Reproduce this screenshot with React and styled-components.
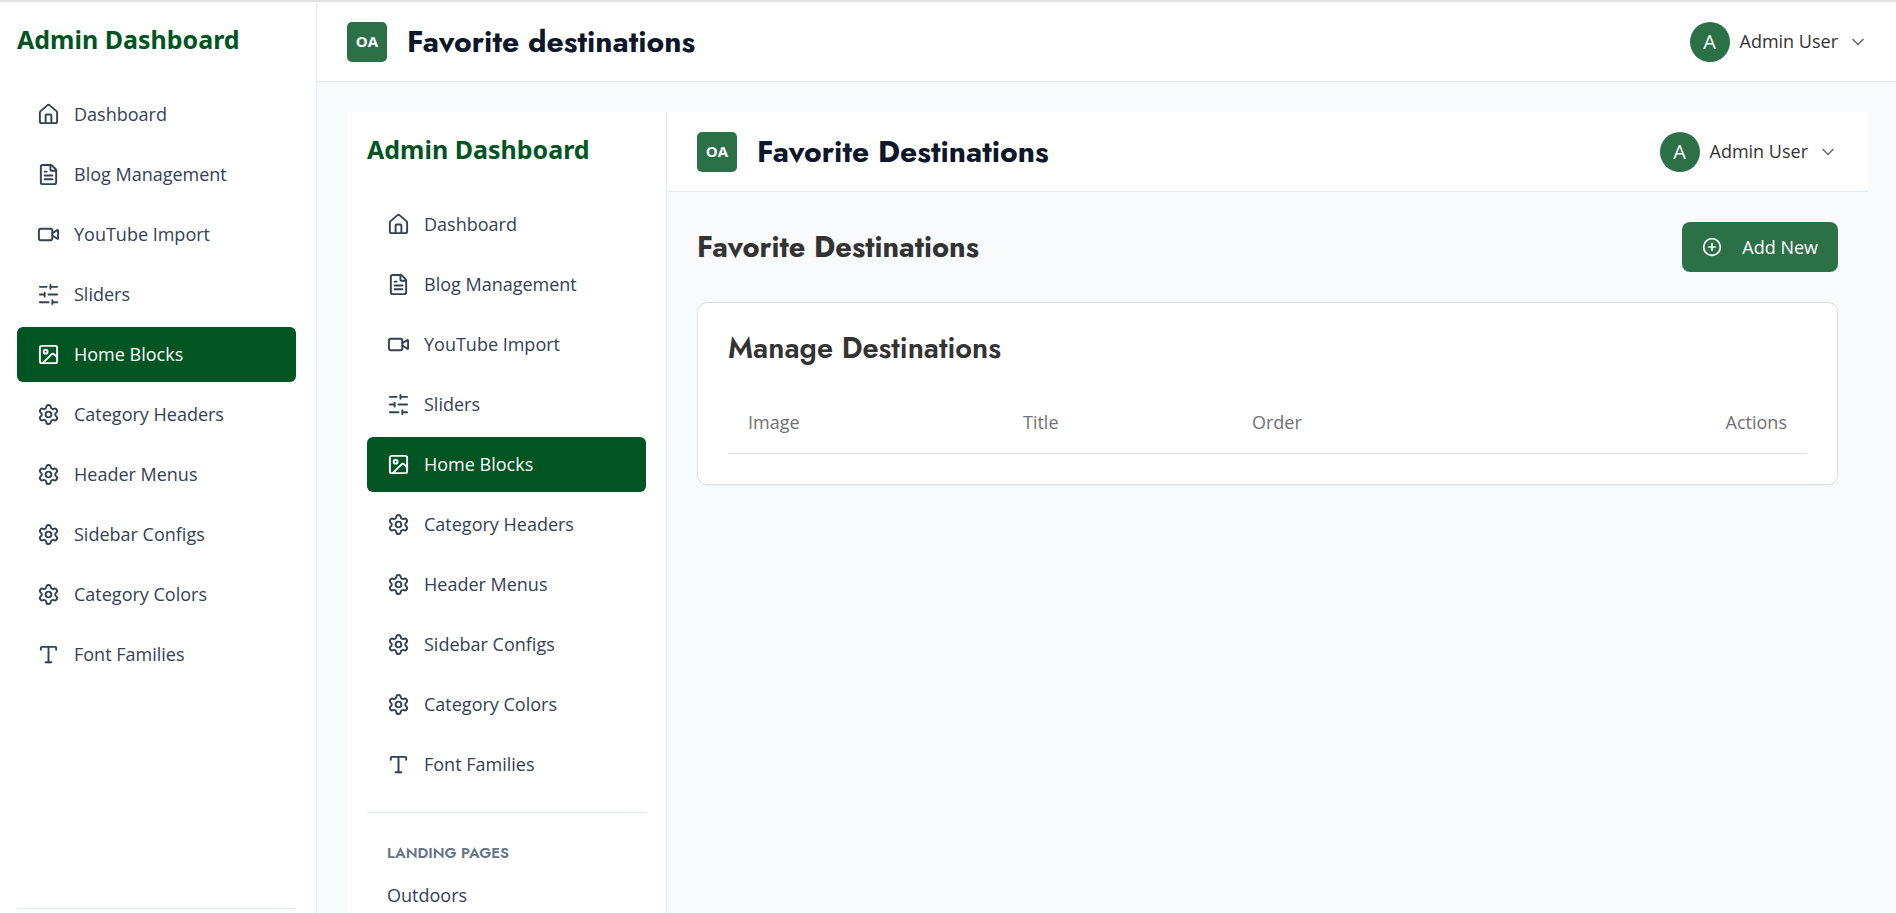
import React from "react";
import styled, { createGlobalStyle, css } from "styled-components";
import {
  House,
  FileText,
  Video,
  Image as ImageIcon,
  Settings,
  Type,
  ChevronDown,
  CirclePlus,
} from "lucide-react";

const bodyFont = `"Open Sans", "Noto Sans", sans-serif`;
const headingFont = `Jost, Lato, "Open Sans", sans-serif`;

const GlobalStyle = createGlobalStyle`
  *, *::before, *::after { box-sizing: border-box; }
  body {
    margin: 0;
    font-family: ${bodyFont};
    font-size: 18px;
    line-height: 25px;
    color: #333333;
    background: #f8fafc;
  }
  h1, h2, h3, p, ul { margin: 0; padding: 0; }
  a { color: inherit; text-decoration: none; }
  button { font: inherit; border: 0; cursor: pointer; }
`;

const Page = styled.div`
  display: flex;
  height: 100vh;
  overflow: hidden;
  border-top: 2px solid #e2e2e2;
`;

const Shell = styled.div`
  display: flex;
  min-height: 100%;
`;

const SidebarBox = styled.aside`
  display: flex;
  flex-direction: column;
  flex: none;
  width: ${(p) => (p.$flush ? 317 : 320)}px;
  padding: 20px 20px 0 ${(p) => (p.$flush ? 17 : 20)}px;
  background: #ffffff;
  border-right: 1px solid #e2e8f0;
`;

const Brand = styled.p`
  margin-bottom: 30px;
  font-family: "Noto Sans", "Open Sans", sans-serif;
  font-size: 25px;
  line-height: 35px;
  font-weight: 700;
  color: #005522;
`;

const NavList = styled.ul`
  display: flex;
  flex-direction: column;
  gap: 5px;
  list-style: none;
`;

const NavLink = styled.a`
  display: flex;
  align-items: center;
  gap: 14px;
  height: 55px;
  padding: 0 20px;
  border-radius: 6px;
  color: #334155;
  svg { flex: none; }
  ${(p) =>
    p.$active &&
    css`
      background: #005522;
      color: #ffffff;
      font-weight: 500;
    `}
`;

const NavSection = styled.section`
  margin-top: ${(p) => (p.$pinned ? "auto" : "20px")};
  padding-top: ${(p) => (p.$pinned ? 4 : 30)}px;
  border-top: 1px solid #e2e8f0;
`;

const SectionTitle = styled.h3`
  padding: 0 20px;
  margin-bottom: 10px;
  font-family: ${headingFont};
  font-size: 15px;
  line-height: 20px;
  font-weight: 600;
  text-transform: uppercase;
  color: #64748b;
`;

const SubLink = styled.a`
  display: block;
  padding: 10px 20px;
  color: #334155;
`;

const Column = styled.div`
  display: flex;
  flex-direction: column;
  flex: 1;
  min-width: 0;
`;

const HeaderBar = styled.header`
  display: flex;
  align-items: center;
  justify-content: space-between;
  flex: none;
  height: 80px;
  padding: 0 ${(p) => p.$end}px 0 30px;
  background: #ffffff;
  border-bottom: 1px solid #e2e8f0;
`;

const HeaderGroup = styled.div`
  display: flex;
  align-items: center;
  gap: 20px;
`;

const Logo = styled.div`
  display: grid;
  place-items: center;
  width: 40px;
  height: 40px;
  border-radius: 5px;
  background: #2c7048;
  color: #ffffff;
  font-size: 15px;
  font-weight: 700;
`;

const HeaderTitle = styled.h1`
  font-family: ${headingFont};
  font-size: 30px;
  line-height: 40px;
  font-weight: 700;
  color: #0f172a;
`;

const UserButton = styled.button`
  display: flex;
  align-items: center;
  gap: 10px;
  padding: 0;
  background: none;
  color: #333333;
  svg { color: #717171; }
`;

const Avatar = styled.span`
  display: grid;
  place-items: center;
  width: 40px;
  height: 40px;
  border-radius: 50%;
  background: #2c7048;
  color: #ffffff;
  font-size: 20px;
`;

const Content = styled.main`
  flex: 1;
  padding: 30px ${(p) => p.$end}px 0 30px;
`;

const InnerContent = styled.section`
  padding: 30px;
`;

const TitleRow = styled.div`
  display: flex;
  align-items: center;
  justify-content: space-between;
  margin-bottom: 30px;
`;

const PageTitle = styled.h2`
  font-family: ${headingFont};
  font-size: 29px;
  line-height: 40px;
  font-weight: 700;
`;

const AddButton = styled.button`
  display: flex;
  align-items: center;
  gap: 20px;
  height: 50px;
  padding: 0 20px;
  border-radius: 8px;
  background: #2c7048;
  color: #ffffff;
  font-weight: 500;
`;

const Card = styled.section`
  padding: 30px;
  background: #ffffff;
  border: 1px solid #dfe0e2;
  border-radius: 10px;
  box-shadow: 0 1px 2px rgba(0, 0, 0, 0.05);
`;

const CardTitle = styled.h3`
  margin-bottom: 30px;
  font-family: ${headingFont};
  font-size: 29px;
  line-height: 30px;
  font-weight: 600;
`;

const Table = styled.table`
  width: 100%;
  table-layout: fixed;
  border-collapse: collapse;
`;

const Th = styled.th`
  width: ${(p) => (p.$width ? `${p.$width}px` : "auto")};
  height: 60px;
  padding: 0 20px;
  text-align: ${(p) => p.$align || "left"};
  font-weight: 400;
  color: #717171;
  border-bottom: 1px solid #dfe0e2;
`;

function SlidersIcon({ size }) {
  return (
    <svg
      width={size}
      height={size}
      viewBox="0 0 24 24"
      fill="none"
      stroke="currentColor"
      strokeWidth="2"
      strokeLinecap="round"
      strokeLinejoin="round"
      aria-hidden="true"
    >
      <path d="M21 4h-7M10 4H3M21 12h-9M8 12H3M21 20h-5M12 20H3M14 2v4M8 10v4M16 18v4" />
    </svg>
  );
}

const items = [
  ["Dashboard", House],
  ["Blog Management", FileText],
  ["YouTube Import", Video],
  ["Sliders", SlidersIcon],
  ["Home Blocks", ImageIcon],
  ["Category Headers", Settings],
  ["Header Menus", Settings],
  ["Sidebar Configs", Settings],
  ["Category Colors", Settings],
  ["Font Families", Type],
];

function Sidebar({ flush, children }) {
  return (
    <SidebarBox $flush={flush}>
      <Brand>Admin Dashboard</Brand>
      <nav>
        <NavList>
          {items.map(([label, Icon]) => (
            <li key={label}>
              <NavLink href="#" $active={label === "Home Blocks"}>
                <Icon size={23} />
                {label}
              </NavLink>
            </li>
          ))}
        </NavList>
      </nav>
      {children}
    </SidebarBox>
  );
}

function Header({ title, end }) {
  return (
    <HeaderBar $end={end}>
      <HeaderGroup>
        <Logo>OA</Logo>
        <HeaderTitle>{title}</HeaderTitle>
      </HeaderGroup>
      <UserButton type="button">
        <Avatar>A</Avatar>
        Admin User
        <ChevronDown size={20} />
      </UserButton>
    </HeaderBar>
  );
}

export default function App() {
  return (
    <>
      <GlobalStyle />
      <Page>
        <Sidebar flush>
          <NavSection $pinned />
        </Sidebar>
        <Column>
          <Header title="Favorite destinations" end={28} />
          <Content $end={28}>
            <Shell>
              <Sidebar>
                <NavSection>
                  <SectionTitle>Landing Pages</SectionTitle>
                  <SubLink href="#">Outdoors</SubLink>
                </NavSection>
              </Sidebar>
              <Column>
                <Header title="Favorite Destinations" end={30} />
                <InnerContent>
                  <TitleRow>
                    <PageTitle>Favorite Destinations</PageTitle>
                    <AddButton type="button">
                      <CirclePlus size={20} />
                      Add New
                    </AddButton>
                  </TitleRow>
                  <Card>
                    <CardTitle>Manage Destinations</CardTitle>
                    <Table>
                      <thead>
                        <tr>
                          <Th scope="col" $width={275}>Image</Th>
                          <Th scope="col" $width={229}>Title</Th>
                          <Th scope="col">Order</Th>
                          <Th scope="col" $align="right">Actions</Th>
                        </tr>
                      </thead>
                    </Table>
                  </Card>
                </InnerContent>
              </Column>
            </Shell>
          </Content>
        </Column>
      </Page>
    </>
  );
}
